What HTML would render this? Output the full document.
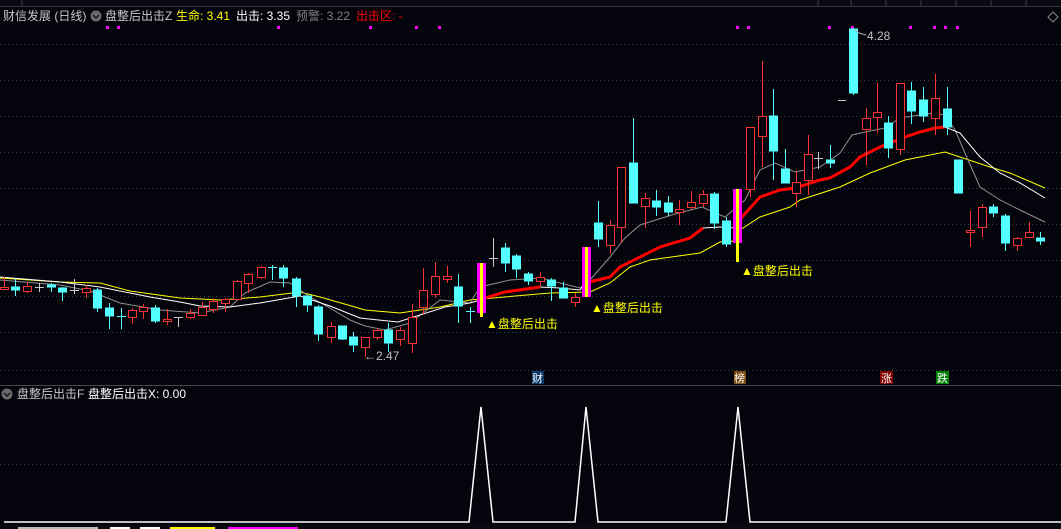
<!DOCTYPE html>
<html><head><meta charset="utf-8"><style>
html,body{margin:0;padding:0;background:#04040c;width:1061px;height:529px;overflow:hidden}
svg{display:block}
text{font-family:"Liberation Sans","Noto Sans CJK SC",sans-serif}
</style></head><body>
<svg width="1061" height="529" viewBox="0 0 1061 529" xmlns="http://www.w3.org/2000/svg">
<rect width="1061" height="529" fill="#04040c"/>
<rect x="0" y="0" width="1061" height="6" fill="#0a0a12"/>
<line x1="0" y1="6.5" x2="1061" y2="6.5" stroke="#3a3a44"/>
<g stroke="#3a3a44"><line x1="22" y1="0" x2="22" y2="6"/><line x1="818" y1="0" x2="818" y2="6"/><line x1="851" y1="0" x2="851" y2="6"/><line x1="886" y1="0" x2="886" y2="6"/><line x1="921" y1="0" x2="921" y2="6"/><line x1="956" y1="0" x2="956" y2="6"/><line x1="991" y1="0" x2="991" y2="6"/><line x1="1026" y1="0" x2="1026" y2="6"/></g>
<g stroke="#3a3a48" stroke-dasharray="1,3">
<line x1="0" y1="44.5" x2="1061" y2="44.5"/><line x1="0" y1="80.5" x2="1061" y2="80.5"/><line x1="0" y1="116.5" x2="1061" y2="116.5"/><line x1="0" y1="152.5" x2="1061" y2="152.5"/><line x1="0" y1="188.5" x2="1061" y2="188.5"/><line x1="0" y1="224.5" x2="1061" y2="224.5"/><line x1="0" y1="260.5" x2="1061" y2="260.5"/><line x1="0" y1="296.5" x2="1061" y2="296.5"/><line x1="0" y1="332.5" x2="1061" y2="332.5"/><line x1="0" y1="370.5" x2="1061" y2="370.5"/><line x1="0" y1="464.5" x2="1061" y2="464.5"/>
</g>
<line x1="0" y1="385.5" x2="1061" y2="385.5" stroke="#46464e"/>
<text x="3" y="20" font-size="12" fill="#c8c8c8">财信发展 (日线)</text>
<circle cx="96" cy="16" r="5.5" fill="#6a6a6a"/><path d="M93 15 L96 18 L99 15" stroke="#111" stroke-width="1.3" fill="none"/>
<text x="105" y="20" font-size="12" fill="#c8c8c8">盘整后出击Z</text>
<text x="176" y="20" font-size="12" fill="#ffff00">生命: 3.41</text>
<text x="236" y="20" font-size="12" fill="#ffffff">出击: 3.35</text>
<text x="296" y="20" font-size="12" fill="#808080">预警: 3.22</text>
<text x="356" y="20" font-size="12" fill="#ff0000">出击区: -</text>
<path d="M1053 12 L1058 17 L1053 22 L1048 17 Z" stroke="#888" fill="none"/>
<g fill="#ff00ff">
<rect x="106" y="26" width="3" height="3"/><rect x="117" y="26" width="3" height="3"/><rect x="277" y="26" width="3" height="3"/><rect x="369" y="26" width="3" height="3"/><rect x="415" y="26" width="3" height="3"/><rect x="438" y="26" width="3" height="3"/><rect x="736" y="26" width="3" height="3"/><rect x="747" y="26" width="3" height="3"/><rect x="828" y="26" width="3" height="3"/><rect x="851" y="26" width="3" height="3"/><rect x="909" y="26" width="3" height="3"/><rect x="933" y="26" width="3" height="3"/><rect x="944" y="26" width="3" height="3"/><rect x="956" y="26" width="3" height="3"/>
</g>
<polyline fill="none" stroke="#ffff00" stroke-width="1" points="0,278 60,282 100,283 130,291 180,298 220,300 260,297 300,292 320,297 355,307 365,310 400,313 440,307 470,300 550,293 590,292 610,283 630,267 650,260 700,253 720,242 735,241 740,230 760,217 790,207 800,200 840,187 870,173 905,160 945,152 960,157 990,167 1010,173 1045,188"/>
<polyline fill="none" stroke="#909090" stroke-width="1" points="0,280 60,285 90,291 120,303 160,310 200,313 230,307 245,293 270,282 290,283 310,297 330,308 350,320 365,326 385,330 410,323 440,300 470,303 480,287 510,280 540,278 560,283 580,288 590,280 610,257 625,238 640,225 675,214 702,207 725,217 745,200 760,170 775,163 795,172 820,167 840,153 852,135 865,132 885,128 900,118 920,115 935,113 945,115 955,130 968,160 980,187 1000,200 1020,210 1045,222"/>
<polyline fill="none" stroke="#ffffff" stroke-width="1" points="0,277 60,282 100,287 150,297 180,302 200,306 230,307 260,303 300,296 330,306 360,318 398,322 445,307 470,303 480,300"/>
<polyline fill="none" stroke="#ffffff" stroke-width="1" points="540,287 560,288 580,290 585,283"/>
<polyline fill="none" stroke="#ffffff" stroke-width="1" points="703,228 720,227 735,228 738,224"/>
<polyline fill="none" stroke="#ffffff" stroke-width="1" points="945,127 960,133 980,157 1000,173 1020,183 1045,198"/>
<polyline fill="none" stroke="#ff0000" stroke-width="3" points="480,300 485,298 505,292 540,287"/>
<polyline fill="none" stroke="#ff0000" stroke-width="3" points="585,283 610,277 620,267 640,257 660,247 690,238 703,228"/>
<polyline fill="none" stroke="#ff0000" stroke-width="3" points="738,224 742,217 760,197 780,190 795,188 820,180 830,178 850,167 860,157 880,147 905,137 920,132 935,128 945,127"/>
<g stroke-width="1">
<g stroke="#ff3232" fill="#04040c">
<line x1="4.5" y1="277" x2="4.5" y2="290"/><rect x="0.5" y="287.5" width="8" height="2"/>
<line x1="27.5" y1="282" x2="27.5" y2="293"/><rect x="23.5" y="286.5" width="8" height="5"/>
<line x1="86.5" y1="285" x2="86.5" y2="298"/><rect x="82.5" y="288.5" width="8" height="4"/>
<line x1="132.5" y1="308" x2="132.5" y2="324"/><rect x="128.5" y="310.5" width="8" height="7"/>
<line x1="143.5" y1="304" x2="143.5" y2="319"/><rect x="139.5" y="307.5" width="8" height="4"/>
<line x1="167.5" y1="309" x2="167.5" y2="325"/><rect x="163.5" y="319.5" width="8" height="2"/>
<line x1="190.5" y1="309" x2="190.5" y2="319"/><rect x="186.5" y="313.5" width="8" height="4"/>
<line x1="202.5" y1="302" x2="202.5" y2="315"/><rect x="198.5" y="307.5" width="8" height="8"/>
<line x1="213.5" y1="298" x2="213.5" y2="313"/><rect x="209.5" y="301.5" width="8" height="8"/>
<line x1="225.5" y1="298" x2="225.5" y2="312"/><rect x="221.5" y="299.5" width="8" height="4"/>
<line x1="237.5" y1="280" x2="237.5" y2="300"/><rect x="233.5" y="281.5" width="8" height="18"/>
<line x1="248.5" y1="273" x2="248.5" y2="293"/><rect x="244.5" y="274.5" width="8" height="9"/>
<line x1="261.5" y1="266" x2="261.5" y2="279"/><rect x="257.5" y="267.5" width="8" height="10"/>
<line x1="331.5" y1="322" x2="331.5" y2="343"/><rect x="327.5" y="326.5" width="8" height="11"/>
<line x1="365.5" y1="337" x2="365.5" y2="357"/><rect x="361.5" y="337.5" width="8" height="10"/>
<line x1="377.5" y1="328" x2="377.5" y2="340"/><rect x="373.5" y="330.5" width="8" height="7"/>
<line x1="400.5" y1="327" x2="400.5" y2="346"/><rect x="396.5" y="330.5" width="8" height="9"/>
<line x1="412.5" y1="304" x2="412.5" y2="353"/><rect x="408.5" y="317.5" width="8" height="26"/>
<line x1="423.5" y1="268" x2="423.5" y2="314"/><rect x="419.5" y="290.5" width="8" height="17"/>
<line x1="435.5" y1="262" x2="435.5" y2="298"/><rect x="431.5" y="276.5" width="8" height="18"/>
<line x1="447.5" y1="266" x2="447.5" y2="283"/><rect x="443.5" y="276.5" width="8" height="3"/>
<line x1="540.5" y1="272" x2="540.5" y2="286"/><rect x="536.5" y="277.5" width="8" height="4"/>
<line x1="575.5" y1="293" x2="575.5" y2="307"/><rect x="571.5" y="297.5" width="8" height="5"/>
<line x1="610.5" y1="220" x2="610.5" y2="254"/><rect x="606.5" y="225.5" width="8" height="20"/>
<line x1="621.5" y1="167" x2="621.5" y2="243"/><rect x="617.5" y="167.5" width="8" height="60"/>
<line x1="645.5" y1="193" x2="645.5" y2="228"/><rect x="641.5" y="198.5" width="8" height="8"/>
<line x1="679.5" y1="200" x2="679.5" y2="225"/><rect x="675.5" y="209.5" width="8" height="3"/>
<line x1="691.5" y1="191" x2="691.5" y2="209"/><rect x="687.5" y="202.5" width="8" height="5"/>
<line x1="703.5" y1="190" x2="703.5" y2="207"/><rect x="699.5" y="194.5" width="8" height="9"/>
<line x1="750.5" y1="127" x2="750.5" y2="197"/><rect x="746.5" y="127.5" width="8" height="62"/>
<line x1="762.5" y1="61" x2="762.5" y2="167"/><rect x="758.5" y="116.5" width="8" height="20"/>
<line x1="796.5" y1="171" x2="796.5" y2="207"/><rect x="792.5" y="182.5" width="8" height="11"/>
<line x1="808.5" y1="135" x2="808.5" y2="195"/><rect x="804.5" y="154.5" width="8" height="26"/>
<line x1="866.5" y1="108" x2="866.5" y2="165"/><rect x="862.5" y="118.5" width="8" height="11"/>
<line x1="877.5" y1="83" x2="877.5" y2="133"/><rect x="873.5" y="112.5" width="8" height="5"/>
<line x1="900.5" y1="83" x2="900.5" y2="155"/><rect x="896.5" y="83.5" width="8" height="66"/>
<line x1="935.5" y1="74" x2="935.5" y2="135"/><rect x="931.5" y="98.5" width="8" height="20"/>
<line x1="970.5" y1="211" x2="970.5" y2="247"/><rect x="966.5" y="230.5" width="8" height="2"/>
<line x1="982.5" y1="204" x2="982.5" y2="237"/><rect x="978.5" y="207.5" width="8" height="20"/>
<line x1="1017.5" y1="237" x2="1017.5" y2="251"/><rect x="1013.5" y="238.5" width="8" height="7"/>
<line x1="1029.5" y1="222" x2="1029.5" y2="238"/><rect x="1025.5" y="232.5" width="8" height="5"/>
</g>
<g stroke="#54ffff" fill="#54ffff">
<line x1="15.5" y1="279" x2="15.5" y2="296"/><rect x="11.5" y="287" width="8" height="3"/>
<line x1="51.5" y1="283" x2="51.5" y2="292"/><rect x="47.5" y="285" width="8" height="2"/>
<line x1="62.5" y1="287" x2="62.5" y2="301"/><rect x="58.5" y="288" width="8" height="4"/>
<line x1="97.5" y1="288" x2="97.5" y2="312"/><rect x="93.5" y="290" width="8" height="18"/>
<line x1="109.5" y1="303" x2="109.5" y2="329"/><rect x="105.5" y="308" width="8" height="8"/>
<line x1="121.5" y1="308" x2="121.5" y2="329"/><line x1="117" y1="316.5" x2="126" y2="316.5"/>
<line x1="155.5" y1="305" x2="155.5" y2="323"/><rect x="151.5" y="308" width="8" height="13"/>
<line x1="272.5" y1="265" x2="272.5" y2="280"/><line x1="268" y1="267.5" x2="277" y2="267.5"/>
<line x1="283.5" y1="265" x2="283.5" y2="287"/><rect x="279.5" y="268" width="8" height="10"/>
<line x1="296.5" y1="277" x2="296.5" y2="307"/><rect x="292.5" y="279" width="8" height="17"/>
<line x1="307.5" y1="295" x2="307.5" y2="312"/><rect x="303.5" y="296" width="8" height="9"/>
<line x1="318.5" y1="305" x2="318.5" y2="341"/><rect x="314.5" y="307" width="8" height="27"/>
<line x1="342.5" y1="326" x2="342.5" y2="340"/><rect x="338.5" y="326" width="8" height="13"/>
<line x1="353.5" y1="332" x2="353.5" y2="352"/><rect x="349.5" y="337" width="8" height="8"/>
<line x1="388.5" y1="323" x2="388.5" y2="352"/><rect x="384.5" y="330" width="8" height="13"/>
<line x1="458.5" y1="274" x2="458.5" y2="323"/><rect x="454.5" y="287" width="8" height="19"/>
<line x1="470.5" y1="307" x2="470.5" y2="323"/><line x1="466" y1="311.5" x2="475" y2="311.5"/>
<line x1="505.5" y1="243" x2="505.5" y2="272"/><rect x="501.5" y="248" width="8" height="15"/>
<line x1="516.5" y1="254" x2="516.5" y2="278"/><rect x="512.5" y="256" width="8" height="13"/>
<line x1="528.5" y1="272" x2="528.5" y2="285"/><rect x="524.5" y="274" width="8" height="7"/>
<line x1="551.5" y1="278" x2="551.5" y2="301"/><rect x="547.5" y="280" width="8" height="6"/>
<line x1="563.5" y1="282" x2="563.5" y2="298"/><rect x="559.5" y="288" width="8" height="10"/>
<line x1="598.5" y1="201" x2="598.5" y2="247"/><rect x="594.5" y="223" width="8" height="16"/>
<line x1="633.5" y1="118" x2="633.5" y2="203"/><rect x="629.5" y="163" width="8" height="40"/>
<line x1="656.5" y1="190" x2="656.5" y2="216"/><rect x="652.5" y="201" width="8" height="6"/>
<line x1="668.5" y1="196" x2="668.5" y2="216"/><rect x="664.5" y="203" width="8" height="9"/>
<line x1="714.5" y1="192" x2="714.5" y2="229"/><rect x="710.5" y="194" width="8" height="29"/>
<line x1="726.5" y1="217" x2="726.5" y2="247"/><rect x="722.5" y="221" width="8" height="23"/>
<line x1="773.5" y1="89" x2="773.5" y2="180"/><rect x="769.5" y="116" width="8" height="35"/>
<line x1="785.5" y1="149" x2="785.5" y2="183"/><rect x="781.5" y="169" width="8" height="14"/>
<line x1="830.5" y1="145" x2="830.5" y2="168"/><rect x="826.5" y="160" width="8" height="3"/>
<line x1="853.5" y1="28" x2="853.5" y2="95"/><rect x="849.5" y="29" width="8" height="64"/>
<line x1="888.5" y1="116" x2="888.5" y2="158"/><rect x="884.5" y="123" width="8" height="25"/>
<line x1="911.5" y1="82" x2="911.5" y2="124"/><rect x="907.5" y="91" width="8" height="20"/>
<line x1="923.5" y1="87" x2="923.5" y2="122"/><rect x="919.5" y="100" width="8" height="16"/>
<line x1="947.5" y1="87" x2="947.5" y2="135"/><rect x="943.5" y="109" width="8" height="18"/>
<rect x="954.5" y="160" width="8" height="33"/>
<line x1="993.5" y1="204" x2="993.5" y2="217"/><rect x="989.5" y="207" width="8" height="6"/>
<line x1="1005.5" y1="214" x2="1005.5" y2="251"/><rect x="1001.5" y="216" width="8" height="27"/>
<line x1="1040.5" y1="232" x2="1040.5" y2="245"/><rect x="1036.5" y="238" width="8" height="3"/>
</g>
<g stroke="#c8c8c8">
<line x1="39.5" y1="283" x2="39.5" y2="292"/><line x1="35" y1="287.5" x2="44" y2="287.5"/>
<line x1="74.5" y1="279" x2="74.5" y2="294"/><line x1="70" y1="290.5" x2="79" y2="290.5"/>
<line x1="178.5" y1="317" x2="178.5" y2="327"/><line x1="174" y1="317.5" x2="183" y2="317.5"/>
<line x1="493.5" y1="238" x2="493.5" y2="267"/><line x1="489" y1="258.5" x2="498" y2="258.5"/>
<line x1="818.5" y1="152" x2="818.5" y2="169"/><line x1="814" y1="158.5" x2="823" y2="158.5"/>
<line x1="838" y1="100.5" x2="846" y2="100.5"/>
</g>
</g>
<rect x="477" y="263" width="9" height="50" fill="#ff00ff"/><rect x="480" y="263" width="3" height="54" fill="#ffff00"/>
<rect x="582" y="247" width="9" height="50" fill="#ff00ff"/><rect x="585" y="247" width="3" height="50" fill="#ffff00"/>
<rect x="733" y="189" width="9" height="54" fill="#ff00ff"/><rect x="736" y="189" width="3" height="73" fill="#ffff00"/>
<text x="486" y="328" font-size="12" fill="#ffff00">▲盘整后出击</text>
<text x="591" y="312" font-size="12" fill="#ffff00">▲盘整后出击</text>
<text x="741" y="275" font-size="12" fill="#ffff00">▲盘整后出击</text>
<polyline points="855,30 859,33 866,35" stroke="#aaa" fill="none"/>
<text x="867" y="40" font-size="12" fill="#c0c0c0">4.28</text>
<text x="364" y="360" font-size="12" fill="#c0c0c0">←2.47</text>
<rect x="532" y="371" width="12" height="13" fill="#0a3a6a"/><text x="532" y="382" font-size="11" fill="#fff">财</text>
<rect x="734" y="371" width="12" height="13" fill="#7a4a10"/><text x="734" y="382" font-size="11" fill="#fff">榜</text>
<rect x="880" y="371" width="13" height="13" fill="#800000"/><text x="881" y="382" font-size="11" fill="#fff">涨</text>
<rect x="936" y="371" width="13" height="13" fill="#008000"/><text x="937" y="382" font-size="11" fill="#fff">跌</text>
<circle cx="7" cy="394" r="5.5" fill="#6a6a6a"/><path d="M4 393 L7 396 L10 393" stroke="#111" stroke-width="1.3" fill="none"/>
<text x="17" y="398" font-size="12" fill="#c8c8c8">盘整后出击F</text>
<text x="88" y="398" font-size="12" fill="#ffffff">盘整后出击X: 0.00</text>
<polyline fill="none" stroke="#ffffff" stroke-width="1.5" points="4,522 469,522 481,407 493,522 575,522 586,407 598,522 726,522 738,407 750,522 1061,522"/>
<rect x="0" y="525" width="1061" height="4" fill="#0a0a12"/>
<rect x="18" y="527" width="80" height="2" fill="#bbb"/>
<rect x="110" y="527" width="20" height="2" fill="#fff"/><rect x="140" y="527" width="20" height="2" fill="#fff"/>
<rect x="170" y="527" width="45" height="2" fill="#ffff00"/><rect x="228" y="527" width="70" height="2" fill="#ff00ff"/>
</svg>
</body></html>
